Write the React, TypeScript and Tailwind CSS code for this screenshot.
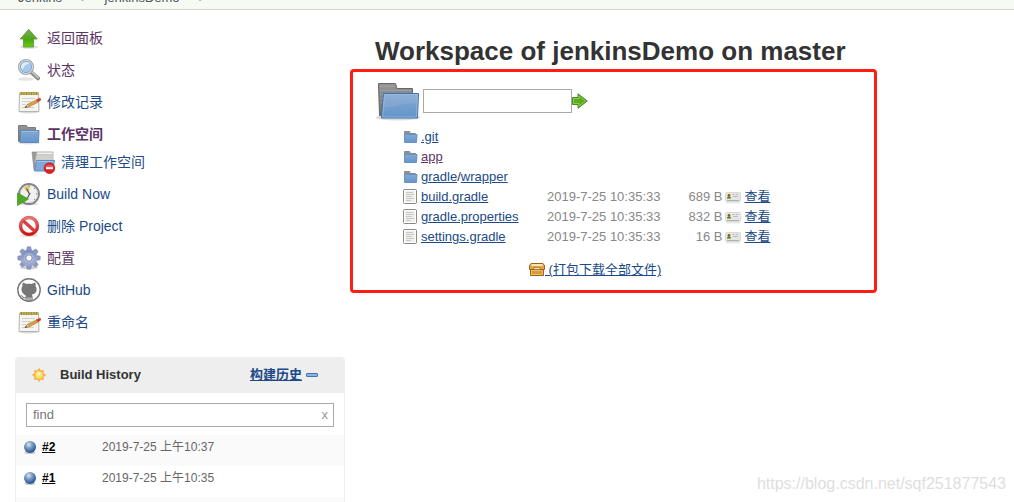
import type { ReactNode } from "react";

const LINK = "text-[#204a87]";
const VISITED = "text-[#5c3566]";

function UpIcon() {
  return (
    <svg className="size-6 shrink-0" viewBox="0 0 24 24">
      <defs>
        <linearGradient id="up" x1="0" y1="0" x2="0" y2="1">
          <stop offset="0" stopColor="#7cab5a" />
          <stop offset="0.6" stopColor="#4ba812" />
          <stop offset="1" stopColor="#63cf0a" />
        </linearGradient>
      </defs>
      <ellipse cx="12" cy="21" rx="9" ry="1.8" fill="#000" opacity="0.13" />
      <path d="M11.7 3.3 20.3 13h-3.800v8h-10v-8H3.200z" fill="url(#up)" stroke="#5a9636" strokeWidth="0.800" />
    </svg>
  );
}

function SearchIcon() {
  return (
    <svg className="size-6 shrink-0" viewBox="0 0 24 24">
      <ellipse cx="9" cy="21" rx="8" ry="1.7" fill="#000" opacity="0.1" />
      <path d="m14.5 14.5 6.5 5.8" stroke="#8b8d89" strokeWidth="4" strokeLinecap="round" />
      <path d="m15 14 6 5.5" stroke="#d0d1cf" strokeWidth="1.4" strokeLinecap="round" />
      <circle cx="9" cy="9" r="7.2" fill="#a9c8ec" stroke="#a9aba7" strokeWidth="1.8" />
      <circle cx="9" cy="9" r="6.3" fill="none" stroke="#eeeeec" strokeWidth="1" />
      <path d="M4 9.5c0-3.5 2.5-5.7 5.5-5.7 1.8 0 3 .7 3.8 1.6-3.5.2-6.3 1.8-7.5 6.1C4.7 11 4 10.5 4 9.5z" fill="#e1ecf9" />
      <circle cx="9" cy="9" r="5.6" fill="none" stroke="#6f9cd0" strokeWidth="0.8" />
    </svg>
  );
}

function NotepadIcon() {
  return (
    <svg className="size-6 shrink-0" viewBox="0 0 24 24">
      <ellipse cx="12" cy="22" rx="10" ry="1.4" fill="#000" opacity="0.15" />
      <path d="M2.5 3h19l.500 18.500h-20z" fill="#f4f4f2" stroke="#b4b6b0" />
      <path d="M3 2h18.500v3H3z" fill="#c2b25c" />
      <path d="M4.5 2v3M7 2v3M9.5 2v3M12 2v3M14.5 2v3M17 2v3M19.5 2v3" stroke="#8f8030" strokeWidth="0.8" />
      <path d="M5 8.5h13M5 11.5h9M5 14.5h4M5 17.5h12" stroke="#d0d1cd" />
      <path d="m8 17.5 3-3.500 9-4.300 1.500 2.200-9 4.700z" fill="#e3a04a" stroke="#a56b18" strokeWidth="0.6" />
      <path d="m8 17.500 3-3.500 1.500 2.500z" fill="#ead7ad" stroke="#8f6a2a" strokeWidth="0.5" />
      <path d="m7.700 17.700 1.500-1.800.9 1.200z" fill="#333" />
      <path d="m19.500 9.700 3-1.400c1-.4 2 1.400 1 2l-2.500 1.500z" fill="#dc3a28" stroke="#a83020" strokeWidth="0.4" />
    </svg>
  );
}

function FolderGradients() {
  return (
    <defs>
      <linearGradient id="folderFront" x1="0" y1="0" x2="0" y2="1">
        <stop offset="0" stopColor="#84aad6" />
        <stop offset="0.5" stopColor="#749fce" />
        <stop offset="1" stopColor="#6395cb" />
      </linearGradient>
      <linearGradient id="folderBack" x1="0" y1="0" x2="0" y2="1">
        <stop offset="0" stopColor="#969696" />
        <stop offset="1" stopColor="#707070" />
      </linearGradient>
    </defs>
  );
}

function LargeFolderIcon() {
  return (
    <svg className="size-12" viewBox="0 0 48 48">
      <FolderGradients />
      <ellipse cx="23" cy="40.5" rx="22.5" ry="3" fill="#000" opacity="0.14" />
      <path d="M3.5 6.500h17l1.500 5h15.500v27h-33z" fill="url(#folderBack)" stroke="#666" />
      <path d="M4.5 9.5h15M5 13.5h31M5 17.5h3M5 21.5h3M5 25.5h2" stroke="#b5b5b5" opacity="0.4" />
      <path d="M8.500 16.500h35l-1 24.500H6.500z" fill="url(#folderFront)" stroke="#4270ab" />
      <path d="M9.500 17.500h32.900l-.9 22.500H7.600z" fill="none" stroke="#a9c7e8" opacity="0.6" />
      <path d="M10 18h32l-.5 8C28 26 19 30 8.5 31z" fill="#fff" opacity="0.08" />
    </svg>
  );
}

function FolderIcon() {
  return (
    <svg className="size-6 shrink-0" viewBox="0 0 24 24">
      <FolderGradients />
      <ellipse cx="12" cy="21" rx="11" ry="1.500" fill="#000" opacity="0.120" />
      <path d="M1.500 3.500h8l1 2h8v14h-17z" fill="url(#folderBack)" stroke="#7c7c7c" />
      <path d="M3.500 8.500h18.500l-.500 12H3z" fill="url(#folderFront)" stroke="#5c8ac2" />
      <path d="M4.500 9.500h16.500" stroke="#a9c7e8" opacity="0.700" />
    </svg>
  );
}

function SmallFolderIcon() {
  return (
    <svg className="size-4" viewBox="0 0 16 16">
      <FolderGradients />
      <path d="M2.500 2.500h5l1 2h5v8h-11z" fill="url(#folderBack)" stroke="#8a8a8a" />
      <path d="M2.500 5.500h12.500l-.5 8h-12z" fill="url(#folderFront)" stroke="#6792c6" />
    </svg>
  );
}

function WipeIcon() {
  return (
    <svg className="size-6 shrink-0" viewBox="0 0 24 24">
      <path d="M1 2h5l1 3v15H3z" fill="#9a9a9a" stroke="#888" strokeWidth="0.6" />
      <path d="M6 2h16v11H4.500z" fill="#f2f2f1" stroke="#b5b5b5" />
      <path d="M5.500 4.500h15.500l-.5 9H4z" fill="#cfcfcd" stroke="#b8b8b6" strokeWidth="0.6" />
      <path d="M5.500 10.500h18l-2 10.500H3.500z" fill="#80a9d8" stroke="#5f8cc2" />
      <path d="M6 11.500h16.500" stroke="#a6c5e8" />
      <circle cx="18.500" cy="18.200" r="5.500" fill="#d92424" stroke="#b81818" strokeWidth="0.5" />
      <path d="M14 17a5 4.500 0 0 1 9 0z" fill="#f08080" opacity="0.6" />
      <path d="M15 17.200h7v2h-7z" fill="#fff" />
    </svg>
  );
}

function BuildNowIcon() {
  return (
    <svg className="size-6 shrink-0" viewBox="0 0 24 24">
      <ellipse cx="12" cy="22" rx="9" ry="1.5" fill="#000" opacity="0.15" />
      <circle cx="12" cy="12" r="10" fill="#f0f0ee" stroke="#83808a" strokeWidth="1.8" />
      <circle cx="12" cy="12" r="8.6" fill="none" stroke="#d5d3da" strokeWidth="1" />
      <path d="M12 12 6.500 6c2-2 4-2.500 6.500-2.500z" fill="#e3cb70" />
      <path d="M12 3.500V5M20.500 12H19M18 6l-1 1M18 18l-1-1" stroke="#8a8790" />
      <path d="m9.500 6.500 3 5.500-2 4M12 12l1.500-.5" stroke="#4c4c52" strokeWidth="1.1" fill="none" />
      <path d="M.5 11 11.500 17l-11 6.500z" fill="#4caa1f" stroke="#51992c" strokeWidth="0.8" />
    </svg>
  );
}

function DeleteIcon() {
  return (
    <svg className="size-6 shrink-0" viewBox="0 0 24 24">
      <defs>
        <linearGradient id="ban" x1="0" y1="0" x2="0" y2="1">
          <stop offset="0" stopColor="#e87878" />
          <stop offset="0.5" stopColor="#d64646" />
          <stop offset="1" stopColor="#d01010" />
        </linearGradient>
      </defs>
      <ellipse cx="12" cy="21.5" rx="9" ry="1.6" fill="#000" opacity="0.12" />
      <circle cx="12" cy="12" r="8.4" fill="#fafafa" stroke="url(#ban)" strokeWidth="3.2" />
      <path d="m6.200 6.700 11.600 10.600" stroke="#d84040" strokeWidth="3.200" />
      <circle cx="12" cy="12" r="9.8" fill="none" stroke="#c03a3a" strokeWidth="0.5" />
    </svg>
  );
}

function GearIcon() {
  const teeth = [0, 45, 90, 135, 180, 225, 270, 315];
  return (
    <svg className="size-6 shrink-0" viewBox="0 0 24 24">
      <defs>
        <linearGradient id="gear" x1="0" y1="0" x2="0" y2="24" gradientUnits="userSpaceOnUse">
          <stop offset="0" stopColor="#5f82b4" />
          <stop offset="0.6" stopColor="#a2a9d2" />
          <stop offset="1" stopColor="#979fc6" />
        </linearGradient>
      </defs>
      <ellipse cx="12" cy="21.5" rx="9" ry="1.8" fill="#000" opacity="0.18" />
      <g fill="#8c9ac4" stroke="#6f7ba6" strokeWidth="0.5">
        {teeth.map((angle) => (
          <path key={angle} d="M9.2 5.500 10.300.8h3.400l1.100 4.700z" transform={`rotate(${angle} 12 12)`} />
        ))}
      </g>
      <circle cx="12" cy="12" r="8" fill="url(#gear)" />
      <circle cx="12" cy="12" r="5.2" fill="#b9bee0" opacity="0.6" />
      <circle cx="12" cy="12" r="3.2" fill="#fff" stroke="#7682aa" strokeWidth="0.9" />
    </svg>
  );
}

function GitHubIcon() {
  return (
    <svg className="size-6 shrink-0" viewBox="0 0 24 24">
      <circle cx="12" cy="12" r="11.2" fill="#fff" stroke="#757575" strokeWidth="1.4" />
      <path
        d="M5.700 4.800c1.500 0 2.800.7 3.600 1.300 1.700-.4 3.700-.4 5.400 0 .8-.6 2.100-1.300 3.600-1.300.5 1.300.4 2.400.2 3.200.8 1 1.100 2 1.100 3.200 0 3.500-2 4.800-4.900 5.200.6.5.9 1.300.9 2.300v4l-1.200.3v-3.600h-.8V23h-1.200v-3.600h-.8V23h-1.200v-3.600h-.8V23l-1.200-.3v-2.400c-2.300.3-2.900-.7-3.600-1.800-.3-.5-.7-.8-1.200-1.100 1.400-.3 2 .5 2.600 1.300.6.7 1.200.8 2.200.5.1-.5.3-.9.7-1.200C6.400 15.600 4.400 14.500 4.400 11.200c0-1.200.4-2.200 1.100-3.100-.2-.9-.3-2 .2-3.300z"
        fill="#777"
      />
    </svg>
  );
}

function GoIcon() {
  return (
    <svg className="size-4" viewBox="0 0 16 16">
      <path d="M.5 4.500h5.500V.8L15.300 8 6 15.200v-3.700H.5z" fill="#5cae1c" stroke="#4d8a24" />
      <path d="M1.500 5.500H7V3l6.500 5L7 13v-2.500H1.500z" fill="none" stroke="#9cd46c" opacity="0.7" />
    </svg>
  );
}

function TextFileIcon() {
  return (
    <svg className="size-4" viewBox="0 0 16 16">
      <rect x="1.5" y="0.5" width="13" height="14" rx="1" fill="#f0f0ee" stroke="#888a85" />
      <rect x="2.5" y="1.5" width="11" height="12" fill="none" stroke="#fff" />
      <path d="M4 3.500h7M4 5.500h8M4 7.500h6M4 9.500h8M4 11.500h5" stroke="#c8c9c6" />
    </svg>
  );
}

function ViewIcon() {
  return (
    <svg className="size-4" viewBox="0 0 16 16">
      <path d="M1 13.500h14" stroke="#000" opacity="0.08" strokeWidth="2" />
      <rect x="0.5" y="3.5" width="15" height="9" rx="1" fill="#e6e6e5" stroke="#dadad8" />
      <circle cx="4" cy="6.300" r="1.300" fill="#8f5902" />
      <path d="M2 9.500c0-3 4-3 4 0z" fill="#4e7a10" />
      <path d="M7.500 5.500h2M11 5.500h2M8 7.500h5" stroke="#bdbdbb" />
      <path d="M2 11.500h12" stroke="#b0b0ae" />
    </svg>
  );
}

function PackageIcon() {
  return (
    <svg className="size-4" viewBox="0 0 16 16">
      <path d="M2 1.500h12l1.500 2v4H.5v-4z" fill="#e2a74e" stroke="#9a651a" />
      <path d="M2.500 3h11" stroke="#f9e3b8" strokeWidth="2" />
      <path d="M1.500 7.500h13v6h-13z" fill="#d99a3a" stroke="#9a651a" />
      <path d="M2.500 8.500h11v4h-11z" fill="none" stroke="#eebf72" />
      <path d="M5 5.500h6v2H5z" fill="#fff1d0" stroke="#8f5902" strokeWidth="0.6" />
    </svg>
  );
}

function SunIcon() {
  return (
    <svg className="size-4" viewBox="0 0 16 16">
      <path
        d="M8 .8 9.800 3.600 13 2.900 12.400 6.100 15.200 8l-2.800 1.900.6 3.200-3.200-.7L8 15.200l-1.800-2.800-3.200.7.6-3.200L.8 8l2.800-1.900L3 2.900l3.200.7z"
        fill="#fbb04c"
      />
      <circle cx="8" cy="8" r="4.3" fill="#fde45c" stroke="#f6ac50" />
      <circle cx="7.5" cy="7" r="2.3" fill="#fff2a0" />
    </svg>
  );
}

function BallIcon() {
  return (
    <svg className="size-4 shrink-0" viewBox="0 0 16 16">
      <defs>
        <radialGradient id="ball" cx="0.4" cy="0.3" r="0.7">
          <stop offset="0" stopColor="#dfe9f0" />
          <stop offset="0.4" stopColor="#7f9fc3" />
          <stop offset="1" stopColor="#1f4e96" />
        </radialGradient>
      </defs>
      <ellipse cx="8" cy="13.8" rx="5.5" ry="1.3" fill="#000" opacity="0.2" />
      <circle cx="8" cy="8" r="6" fill="url(#ball)" />
    </svg>
  );
}

interface TaskProps {
  icon: ReactNode;
  label: string;
  visited?: boolean;
  bold?: boolean;
}

function Task({ icon, label, visited, bold }: TaskProps) {
  return (
    <a
      href="#"
      className={`flex h-8 items-center gap-1.5 pl-0.5 ${visited ? VISITED : LINK} ${bold ? "font-bold" : ""}`}
    >
      {icon}
      {label}
    </a>
  );
}

const folders = [
  { path: [".git"], visited: false },
  { path: ["app"], visited: true },
  { path: ["gradle", "wrapper"], visited: false },
];

const files = [
  { name: "build.gradle", date: "2019-7-25 10:35:33", size: "689 B" },
  { name: "gradle.properties", date: "2019-7-25 10:35:33", size: "832 B" },
  { name: "settings.gradle", date: "2019-7-25 10:35:33", size: "16 B" },
];

const builds = [
  { id: "#2", date: "2019-7-25 上午10:37" },
  { id: "#1", date: "2019-7-25 上午10:35" },
];

function BuildHistory() {
  return (
    <section className="mt-[19px] overflow-hidden rounded-t border-x border-t border-[#eee] text-[13px]">
      <div className="flex h-[35px] items-center bg-[#eee] pr-[26px] pb-0.5 pl-[15px]">
        <SunIcon />
        <h2 className="ml-[13px] flex-1 font-bold">Build History</h2>
        <a href="#" className={`font-bold underline ${LINK}`}>
          构建历史
        </a>
        <button
          type="button"
          aria-label="collapse"
          className="ml-1 h-1 w-3 rounded-[1px] border border-[#3f74b2] bg-[#8db3de]"
        />
      </div>
      <div className="relative px-2.5 pt-2.5 pb-2">
        <input
          type="text"
          placeholder="find"
          aria-label="find"
          className="block h-6 w-full border border-[#a9a9a9] px-1.5 pb-0.5 outline-none placeholder:text-[#777]"
        />
        <button type="button" aria-label="clear" className="absolute top-3 right-4 leading-5 text-[#999]">
          x
        </button>
      </div>
      <table className="w-full table-fixed text-xs">
        <tbody>
          {builds.map((build) => (
            <tr key={build.id} className="h-[31px] odd:bg-[#fafafa]">
              <td className="w-[86px] pl-1.5 align-top">
                <a href="#" className="mt-1 flex items-center gap-1 leading-4 font-bold text-black underline">
                  <BallIcon />
                  {build.id}
                </a>
              </td>
              <td className="align-top">
                <div className="mt-1 leading-4 text-[#666]">{build.date}</div>
              </td>
            </tr>
          ))}
          <tr className="h-2 bg-[#fafafa]">
            <td colSpan={2} />
          </tr>
        </tbody>
      </table>
    </section>
  );
}

function Workspace() {
  return (
    <div className="max-w-[527px] rounded border-3 border-[#ff1e14] pt-[5px] pl-[22px]">
      <form className="flex items-center">
        <LargeFolderIcon />
        <input
          type="text"
          aria-label="path"
          className="h-6 w-[149px] border border-[#a9a9a9] px-1 outline-none"
        />
        <button type="submit" aria-label="go">
          <GoIcon />
        </button>
      </form>
      <table className="mt-0.5 ml-[27px]">
        <tbody>
          {folders.map(({ path, visited }) => (
            <tr key={path.join("/")} className="h-5">
              <td className="w-[19px]">
                <SmallFolderIcon />
              </td>
              <td className="w-[126px]">
                {path.map((part, i) => (
                  <span key={part}>
                    {i > 0 && "/"}
                    <a href="#" className={`underline ${visited ? VISITED : LINK}`}>
                      {part}
                    </a>
                  </span>
                ))}
              </td>
            </tr>
          ))}
          {files.map((file) => (
            <tr key={file.name} className="h-5">
              <td>
                <TextFileIcon />
              </td>
              <td>
                <a href="#" className={`underline ${LINK}`}>
                  {file.name}
                </a>
              </td>
              <td className="whitespace-nowrap text-[#888]">{file.date}</td>
              <td className="w-[62px] text-right text-[#888]">{file.size}</td>
              <td className="pl-[3px]">
                <a href="#" className={`flex items-center gap-[3px] leading-5 whitespace-nowrap underline ${LINK}`}>
                  <ViewIcon />
                  查看
                </a>
              </td>
            </tr>
          ))}
        </tbody>
      </table>
      <a href="#" className={`mt-[13px] mb-2.5 ml-[154px] flex w-fit items-center leading-5 whitespace-pre underline ${LINK}`}>
        <PackageIcon />
        <span> (打包下载全部文件)</span>
      </a>
    </div>
  );
}

export default function App() {
  return (
    <div className="relative h-screen overflow-hidden bg-white font-['Liberation_Sans','Noto_Sans_CJK_SC',sans-serif] text-[13px] leading-5 text-[#333]">
      <nav className="flex h-2.5 items-end gap-[19px] overflow-hidden border-b border-[#d3d7cf] bg-[#f6faf2] pb-px pl-[18px] text-[#4d545d]">
        <a href="#">Jenkins</a>
        <span className="text-[#999]">›</span>
        <a href="#">jenkinsDemo</a>
        <span className="text-[#999]">›</span>
      </nav>
      <div className="flex">
        <aside className="w-[345px] shrink-0 pt-3 pl-[15px]">
          <div className="text-sm">
            <Task icon={<UpIcon />} label="返回面板" visited />
            <Task icon={<SearchIcon />} label="状态" visited />
            <Task icon={<NotepadIcon />} label="修改记录" />
            <Task icon={<FolderIcon />} label="工作空间" visited bold />
            <a href="#" className={`mb-1 flex h-6 items-center gap-1.5 pl-4 ${LINK}`}>
              <WipeIcon />
              清理工作空间
            </a>
            <Task icon={<BuildNowIcon />} label="Build Now" />
            <Task icon={<DeleteIcon />} label="删除 Project" />
            <Task icon={<GearIcon />} label="配置" visited />
            <Task icon={<GitHubIcon />} label="GitHub" />
            <Task icon={<NotepadIcon />} label="重命名" />
          </div>
          <BuildHistory />
        </aside>
        <main className="min-w-0 flex-1 pt-[25px] pl-[5px]">
          <h1 className="mb-0.5 pl-[25px] text-[26px] leading-8 font-bold">
            Workspace of jenkinsDemo on master
          </h1>
          <Workspace />
        </main>
      </div>
      <div className="absolute right-2 bottom-1.5 text-base text-[#dedede]">
        https://blog.csdn.net/sqf251877543
      </div>
    </div>
  );
}
